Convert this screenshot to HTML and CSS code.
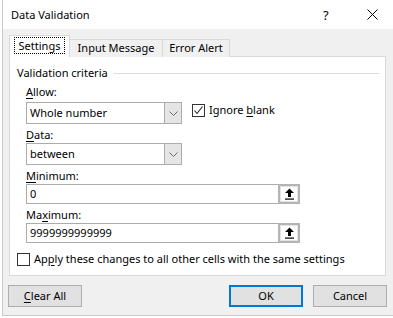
FILE: index.html
```html
<!DOCTYPE html>
<html>
<head>
<meta charset="utf-8">
<title>Data Validation</title>
<link rel="stylesheet" href="styles.css">
</head>
<body>
<div class="dialog">
  <div class="titlebar">
    <span class="title">Data Validation</span>
    <span class="help">?</span>
    <span class="close"><svg width="11" height="11" viewBox="0 0 11 11"><path d="M0.5 0.5 L10.5 10.5 M10.5 0.5 L0.5 10.5" stroke="#000" stroke-width="1" fill="none"/></svg></span>
  </div>
  <div class="content">
    <div class="tabs">
      <div class="tab active"><span class="focus">Settings</span></div>
      <div class="tab t2">Input Message</div>
      <div class="tab t3">Error Alert</div>
    </div>
    <div class="panel">
      <div class="group-title"><span>Validation criteria</span><span class="rule"></span></div>
      <div class="fields">
        <div class="label lab-first"><u>A</u>llow:</div>
        <div class="row">
          <div class="combo"><span class="combo-text">Whole number</span><span class="combo-btn"><svg width="9" height="5" viewBox="0 0 9 5"><path d="M0.5 0.5 L4.5 4.5 L8.5 0.5" stroke="#6a6a6a" stroke-width="1" fill="none"/></svg></span></div>
          <label class="check ignore"><span class="box"><svg width="11" height="11" viewBox="0 0 11 11"><path d="M1.5 5.5 L4 8.5 L9.5 1.5" stroke="#222" stroke-width="1.1" fill="none"/></svg></span><span>Ignore <u>b</u>lank</span></label>
        </div>
        <div class="label"><u>D</u>ata:</div>
        <div class="combo"><span class="combo-text">between</span><span class="combo-btn"><svg width="9" height="5" viewBox="0 0 9 5"><path d="M0.5 0.5 L4.5 4.5 L8.5 0.5" stroke="#6a6a6a" stroke-width="1" fill="none"/></svg></span></div>
        <div class="label"><u>M</u>inimum:</div>
        <div class="textbox"><span class="tb-text">0</span><span class="ref-btn"><span class="ref-inner"><svg width="11" height="12" viewBox="0 0 11 12"><path d="M5.5 0.5 L10 5 L7 5 L7 9 L4 9 L4 5 L1 5 Z" fill="#000"/><rect x="1" y="10.5" width="9" height="1.2" fill="#000"/></svg></span></span></div>
        <div class="label">Ma<u>x</u>imum:</div>
        <div class="textbox"><span class="tb-text">9999999999999</span><span class="ref-btn"><span class="ref-inner"><svg width="11" height="12" viewBox="0 0 11 12"><path d="M5.5 0.5 L10 5 L7 5 L7 9 L4 9 L4 5 L1 5 Z" fill="#000"/><rect x="1" y="10.5" width="9" height="1.2" fill="#000"/></svg></span></span></div>
      </div>
      <label class="check apply"><span class="box"></span><span>Ap<u>p</u>ly these changes to all other cells with the same settings</span></label>
    </div>
    <div class="buttons">
      <button class="btn"><u>C</u>lear All</button>
      <span class="spacer"></span>
      <button class="btn default">OK</button>
      <button class="btn">Cancel</button>
    </div>
  </div>
</div>
</body>
</html>
```
FILE: styles.css
```css
html, body {
  margin: 0;
  padding: 0;
  background: #ffffff;
}
body {
  width: 393px;
  height: 318px;
  overflow: hidden;
  font-family: "Noto Sans", "Open Sans", sans-serif;
  font-size: 11px;
  color: #000;
}
u {
  text-decoration: underline;
  text-underline-offset: 2px;
}
.dialog {
  margin-left: 2px;
  width: 390px;
  height: 315px;
  border-left: 1px solid #c9c9c9;
  border-bottom: 1px solid #c9c9c9;
  display: flex;
  flex-direction: column;
  background: #f0f0f0;
}
.titlebar {
  height: 29px;
  background: #ffffff;
  display: flex;
  align-items: center;
  padding-left: 8px;
  box-sizing: border-box;
  font-size: 11px;
}
.title {
  flex: 1;
  line-height: 16px;
}
.help {
  width: 10px;
  font-size: 13px;
  line-height: 16px;
  margin-right: 34px;
}
.close {
  width: 11px;
  height: 11px;
  margin-right: 15px;
  display: flex;
}
.content {
  flex: 1;
  padding: 7px 7px 0 6px;
  display: flex;
  flex-direction: column;
}
.tabs {
  display: flex;
  align-items: flex-end;
  height: 21px;
  position: relative;
  z-index: 1;
  margin-bottom: -1px;
}
.tab {
  box-sizing: border-box;
  height: 18px;
  border-top: 1px solid #d9d9d9;
  border-right: 1px solid #d9d9d9;
  background: #f0f0f0;
  line-height: 16px;
  text-align: center;
}
.tab.active {
  width: 61px;
  height: 22px;
  border: 1px solid #d9d9d9;
  border-bottom: none;
  background: #ffffff;
  padding-top: 2px;
}
.focus {
  display: inline-block;
  outline: 1px dotted #000;
  padding: 0 4px;
  line-height: 15px;
}
.t2 { width: 93px; }
.t3 { width: 67px; }
.panel {
  height: 220px;
  box-sizing: border-box;
  border: 1px solid #d9d9d9;
  background: #ffffff;
  padding: 8px 6px 0 7px;
  display: flex;
  flex-direction: column;
}
.group-title {
  display: flex;
  align-items: center;
  line-height: 16px;
}
.rule {
  flex: 1;
  height: 1px;
  background: #dcdcdc;
  margin-left: 6px;
}
.fields {
  padding-left: 9px;
  display: flex;
  flex-direction: column;
  align-items: flex-start;
}
.label {
  line-height: 16px;
  margin-top: 3px;
}
.lab-first { margin-top: 3px; margin-bottom: 2px; }
.row {
  display: flex;
  align-items: flex-start;
}
.combo {
  width: 156px;
  height: 22px;
  box-sizing: border-box;
  border: 1px solid #acacac;
  display: flex;
  background: #fff;
}
.combo-text {
  flex: 1;
  line-height: 20px;
  padding-left: 3px;
}
.combo-btn {
  width: 17px;
  background: #e5e5e5;
  border-left: 1px solid #acacac;
  display: flex;
  align-items: center;
  justify-content: center;
  box-sizing: border-box;
}
.check {
  display: flex;
  align-items: center;
  line-height: 16px;
}
.box {
  width: 13px;
  height: 13px;
  box-sizing: border-box;
  border: 1px solid #333;
  background: #fff;
  display: flex;
  align-items: center;
  justify-content: center;
  margin-right: 4px;
}
.ignore {
  margin-left: 10px;
}
.textbox {
  width: 274px;
  height: 20px;
  box-sizing: border-box;
  border: 1px solid #acacac;
  display: flex;
  background: #fff;
}
.tb-text {
  flex: 1;
  line-height: 18px;
  padding-left: 3px;
}
.ref-btn {
  width: 22px;
  height: 20px;
  margin: -1px -1px -1px 0;
  box-sizing: border-box;
  border: 2px solid #b4b4b4;
  background: #fff;
  display: flex;
  align-items: center;
  justify-content: center;
}
.ref-inner {
  display: flex;
  align-items: center;
  justify-content: center;
  width: 16px;
  height: 14px;
  border: 1px solid #e3e3e3;
}
.apply {
  margin-top: 8px;
}
.buttons {
  margin-top: 9px;
  margin-left: -1px;
  margin-right: -1px;
  display: flex;
}
.spacer { flex: 1; }
.btn {
  width: 74px;
  height: 22px;
  box-sizing: border-box;
  border: 1px solid #adadad;
  background: #e1e1e1;
  font-family: "Noto Sans", "Open Sans", sans-serif;
  font-size: 11px;
  color: #000;
  padding: 0;
  line-height: 18px;
}
.btn.default {
  border: 2px solid #0078d7;
  margin-right: 10px;
}
```
